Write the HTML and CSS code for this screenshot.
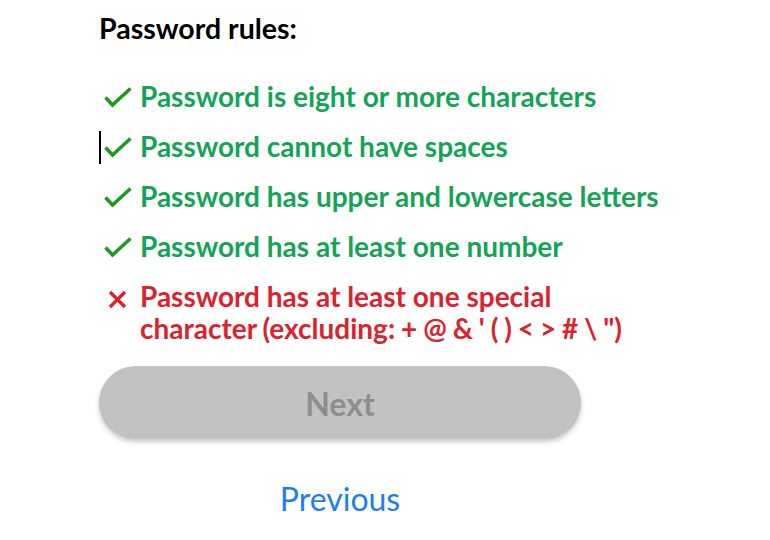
FILE: index.html
```html
<!DOCTYPE html>
<html>
<head>
<meta charset="utf-8">
<link rel="stylesheet" href="styles.css">
</head>
<body>
<div class="page">
  <h2 class="title">Password rules:</h2>
  <ul class="rules">
    <li class="rule ok"><svg class="icon" viewBox="0 0 28 22"><path d="M1.5 10.5 L8.5 18 L26.5 1.5" fill="none" stroke="#1c9b1c" stroke-width="3.5"/></svg><span>Password is eight or more characters</span></li>
    <li class="rule ok caret"><svg class="icon" viewBox="0 0 28 22"><path d="M1.5 10.5 L8.5 18 L26.5 1.5" fill="none" stroke="#1c9b1c" stroke-width="3.5"/></svg><span>Password cannot have spaces</span></li>
    <li class="rule ok"><svg class="icon" viewBox="0 0 28 22"><path d="M1.5 10.5 L8.5 18 L26.5 1.5" fill="none" stroke="#1c9b1c" stroke-width="3.5"/></svg><span>Password has upper and lowercase letters</span></li>
    <li class="rule ok"><svg class="icon" viewBox="0 0 28 22"><path d="M1.5 10.5 L8.5 18 L26.5 1.5" fill="none" stroke="#1c9b1c" stroke-width="3.5"/></svg><span>Password has at least one number</span></li>
    <li class="rule bad"><svg class="icon x" viewBox="0 0 28 22"><path d="M6 4 L21 19 M21 4 L6 19" fill="none" stroke="#d9232c" stroke-width="3.2"/></svg><span>Password has at least one special<br><span class="tight">character (excluding: + @ &amp; ' ( ) &lt; &gt; # \ ")</span></span></li>
  </ul>
  <button class="next" disabled>Next</button>
  <div class="prev-wrap"><a class="prev" href="#">Previous</a></div>
</div>
</body>
</html>
```
FILE: styles.css
```css
html, body {
  margin: 0;
  padding: 0;
  background: #fff;
}
body {
  font-family: Lato, "Open Sans", sans-serif;
}
.page {
  width: 482px;
  padding: 12px 0 0 99px;
}
.title {
  margin: 0;
  font-size: 28.5px;
  font-weight: 700;
  line-height: 32px;
  color: #000;
}
.rules {
  list-style: none;
  margin: 36px 0 0 0;
  padding: 0;
  display: flex;
  flex-direction: column;
  gap: 18px;
}
.rule {
  display: flex;
  align-items: flex-start;
  font-size: 28px;
  font-weight: 700;
  line-height: 32px;
  white-space: nowrap;
}
.rule .icon {
  width: 28px;
  height: 22px;
  margin: 7px 8px 0 5px;
  flex: none;
}
.rule.bad .icon {
  margin-top: 8px;
}
.tight {
  word-spacing: -0.9px;
}
.ok { color: #13a555; }
.bad { color: #da242c; }
.caret {
  position: relative;
}
.caret::before {
  content: "";
  position: absolute;
  left: 0;
  top: 1px;
  width: 2px;
  height: 33px;
  background: #000;
}
.next {
  display: block;
  width: 482px;
  height: 73px;
  margin-top: 22px;
  padding-top: 3px;
  border: none;
  border-radius: 37px;
  background: #c2c2c2;
  color: #8e8e8e;
  font-family: Lato, sans-serif;
  font-size: 32px;
  font-weight: 700;
  box-shadow: 0 3px 5px rgba(0,0,0,0.22);
}
.prev-wrap {
  width: 482px;
  text-align: center;
  margin-top: 41px;
}
.prev {
  color: #1a80f4;
  font-size: 32px;
  text-decoration: none;
  line-height: 38px;
}
```
